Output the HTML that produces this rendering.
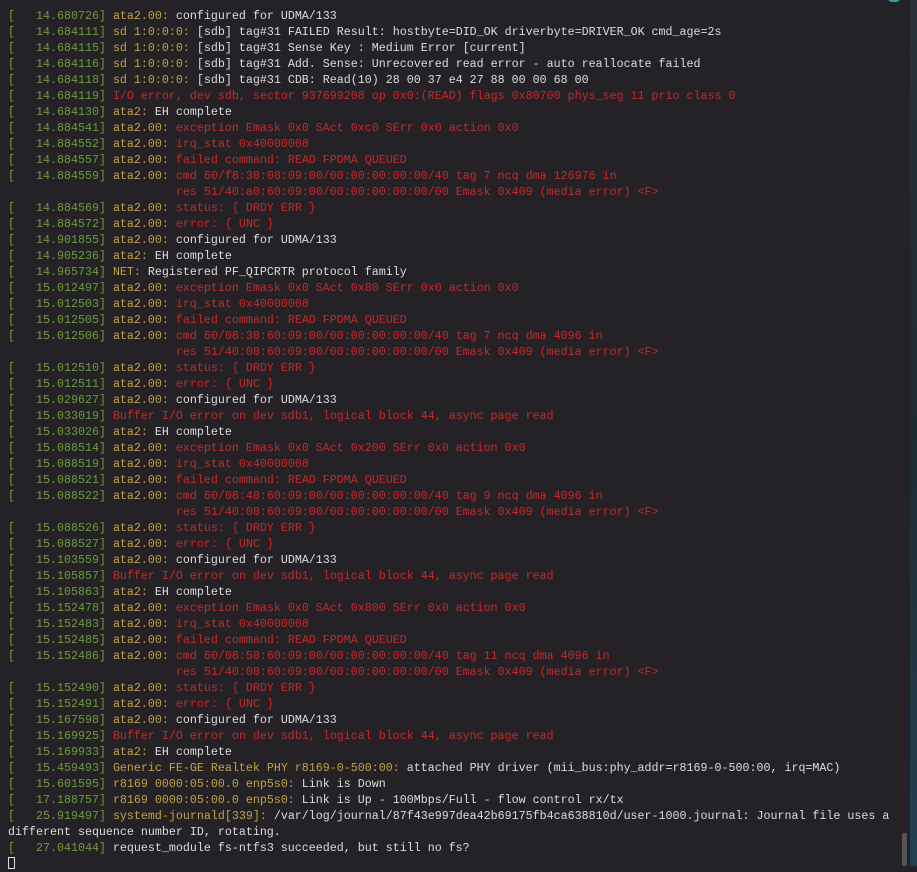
<!DOCTYPE html>
<html><head><meta charset="utf-8"><style>
html,body{margin:0;padding:0;width:917px;height:866px;overflow:hidden;background:#242226;}
.side{position:absolute;left:910px;top:0;width:7px;height:866px;background:linear-gradient(#2a3036,#1e2a32 50%,#244050);}
pre{position:absolute;left:8px;top:8px;margin:0;font-family:"Liberation Mono",monospace;font-size:11.67px;line-height:16px;color:#dcdcdc;white-space:pre;}
.g{color:#6f9a3a}.y{color:#c2a244}.r{color:#c42a2a}.w{color:#e2e2e2}
.sb{position:absolute;left:902px;top:833px;width:5px;height:33px;background:#555;border-radius:2px;}
.cur{display:inline-block;width:7px;height:12px;border:1px solid #ddd;box-sizing:border-box;vertical-align:-2px;}
.dot{position:absolute;left:888px;top:-6px;width:12px;height:8px;border-radius:6px;background:#2aa0a8;}
</style></head><body>
<div class="side"></div><div class="dot"></div><div class="sb"></div>
<pre><span class="g">[   14.680726]</span> <span class="y">ata2.00:</span> configured for UDMA/133
<span class="g">[   14.684111]</span> <span class="y">sd 1:0:0:0:</span> [sdb] tag#31 FAILED Result: hostbyte=DID_OK driverbyte=DRIVER_OK cmd_age=2s
<span class="g">[   14.684115]</span> <span class="y">sd 1:0:0:0:</span> [sdb] tag#31 Sense Key : Medium Error [current]
<span class="g">[   14.684116]</span> <span class="y">sd 1:0:0:0:</span> [sdb] tag#31 Add. Sense: Unrecovered read error - auto reallocate failed
<span class="g">[   14.684118]</span> <span class="y">sd 1:0:0:0:</span> [sdb] tag#31 CDB: Read(10) 28 00 37 e4 27 88 00 00 68 00
<span class="g">[   14.684119]</span> <span class="r">I/O error, dev sdb, sector 937699208 op 0x0:(READ) flags 0x80700 phys_seg 11 prio class 0</span>
<span class="g">[   14.684130]</span> <span class="y">ata2:</span> EH complete
<span class="g">[   14.884541]</span> <span class="y">ata2.00:</span> <span class="r">exception Emask 0x0 SAct 0xc0 SErr 0x0 action 0x0</span>
<span class="g">[   14.884552]</span> <span class="y">ata2.00:</span> <span class="r">irq_stat 0x40000008</span>
<span class="g">[   14.884557]</span> <span class="y">ata2.00:</span> <span class="r">failed command: READ FPDMA QUEUED</span>
<span class="g">[   14.884559]</span> <span class="y">ata2.00:</span> <span class="r">cmd 60/f8:38:08:09:00/00:00:00:00:00/40 tag 7 ncq dma 126976 in</span>
                        <span class="r">res 51/40:a0:60:09:00/00:00:00:00:00/00 Emask 0x409 (media error) &lt;F&gt;</span>
<span class="g">[   14.884569]</span> <span class="y">ata2.00:</span> <span class="r">status: { DRDY ERR }</span>
<span class="g">[   14.884572]</span> <span class="y">ata2.00:</span> <span class="r">error: { UNC }</span>
<span class="g">[   14.901855]</span> <span class="y">ata2.00:</span> configured for UDMA/133
<span class="g">[   14.905236]</span> <span class="y">ata2:</span> EH complete
<span class="g">[   14.965734]</span> <span class="y">NET:</span> Registered PF_QIPCRTR protocol family
<span class="g">[   15.012497]</span> <span class="y">ata2.00:</span> <span class="r">exception Emask 0x0 SAct 0x80 SErr 0x0 action 0x0</span>
<span class="g">[   15.012503]</span> <span class="y">ata2.00:</span> <span class="r">irq_stat 0x40000008</span>
<span class="g">[   15.012505]</span> <span class="y">ata2.00:</span> <span class="r">failed command: READ FPDMA QUEUED</span>
<span class="g">[   15.012506]</span> <span class="y">ata2.00:</span> <span class="r">cmd 60/08:38:60:09:00/00:00:00:00:00/40 tag 7 ncq dma 4096 in</span>
                        <span class="r">res 51/40:08:60:09:00/00:00:00:00:00/00 Emask 0x409 (media error) &lt;F&gt;</span>
<span class="g">[   15.012510]</span> <span class="y">ata2.00:</span> <span class="r">status: { DRDY ERR }</span>
<span class="g">[   15.012511]</span> <span class="y">ata2.00:</span> <span class="r">error: { UNC }</span>
<span class="g">[   15.029627]</span> <span class="y">ata2.00:</span> configured for UDMA/133
<span class="g">[   15.033019]</span> <span class="r">Buffer I/O error on dev sdb1, logical block 44, async page read</span>
<span class="g">[   15.033026]</span> <span class="y">ata2:</span> EH complete
<span class="g">[   15.088514]</span> <span class="y">ata2.00:</span> <span class="r">exception Emask 0x0 SAct 0x200 SErr 0x0 action 0x0</span>
<span class="g">[   15.088519]</span> <span class="y">ata2.00:</span> <span class="r">irq_stat 0x40000008</span>
<span class="g">[   15.088521]</span> <span class="y">ata2.00:</span> <span class="r">failed command: READ FPDMA QUEUED</span>
<span class="g">[   15.088522]</span> <span class="y">ata2.00:</span> <span class="r">cmd 60/08:48:60:09:00/00:00:00:00:00/40 tag 9 ncq dma 4096 in</span>
                        <span class="r">res 51/40:08:60:09:00/00:00:00:00:00/00 Emask 0x409 (media error) &lt;F&gt;</span>
<span class="g">[   15.088526]</span> <span class="y">ata2.00:</span> <span class="r">status: { DRDY ERR }</span>
<span class="g">[   15.088527]</span> <span class="y">ata2.00:</span> <span class="r">error: { UNC }</span>
<span class="g">[   15.103559]</span> <span class="y">ata2.00:</span> configured for UDMA/133
<span class="g">[   15.105857]</span> <span class="r">Buffer I/O error on dev sdb1, logical block 44, async page read</span>
<span class="g">[   15.105863]</span> <span class="y">ata2:</span> EH complete
<span class="g">[   15.152478]</span> <span class="y">ata2.00:</span> <span class="r">exception Emask 0x0 SAct 0x800 SErr 0x0 action 0x0</span>
<span class="g">[   15.152483]</span> <span class="y">ata2.00:</span> <span class="r">irq_stat 0x40000008</span>
<span class="g">[   15.152485]</span> <span class="y">ata2.00:</span> <span class="r">failed command: READ FPDMA QUEUED</span>
<span class="g">[   15.152486]</span> <span class="y">ata2.00:</span> <span class="r">cmd 60/08:58:60:09:00/00:00:00:00:00/40 tag 11 ncq dma 4096 in</span>
                        <span class="r">res 51/40:08:60:09:00/00:00:00:00:00/00 Emask 0x409 (media error) &lt;F&gt;</span>
<span class="g">[   15.152490]</span> <span class="y">ata2.00:</span> <span class="r">status: { DRDY ERR }</span>
<span class="g">[   15.152491]</span> <span class="y">ata2.00:</span> <span class="r">error: { UNC }</span>
<span class="g">[   15.167598]</span> <span class="y">ata2.00:</span> configured for UDMA/133
<span class="g">[   15.169925]</span> <span class="r">Buffer I/O error on dev sdb1, logical block 44, async page read</span>
<span class="g">[   15.169933]</span> <span class="y">ata2:</span> EH complete
<span class="g">[   15.459493]</span> <span class="y">Generic FE-GE Realtek PHY r8169-0-500:00:</span> attached PHY driver (mii_bus:phy_addr=r8169-0-500:00, irq=MAC)
<span class="g">[   15.601595]</span> <span class="y">r8169 0000:05:00.0 enp5s0:</span> Link is Down
<span class="g">[   17.188757]</span> <span class="y">r8169 0000:05:00.0 enp5s0:</span> Link is Up - 100Mbps/Full - flow control rx/tx
<span class="g">[   25.919497]</span> <span class="y">systemd-journald[339]:</span> /var/log/journal/87f43e997dea42b69175fb4ca638810d/user-1000.journal: Journal file uses a
different sequence number ID, rotating.
<span class="g">[   27.041044]</span> request_module fs-ntfs3 succeeded, but still no fs?
<span class="cur"></span></pre>
</body></html>
